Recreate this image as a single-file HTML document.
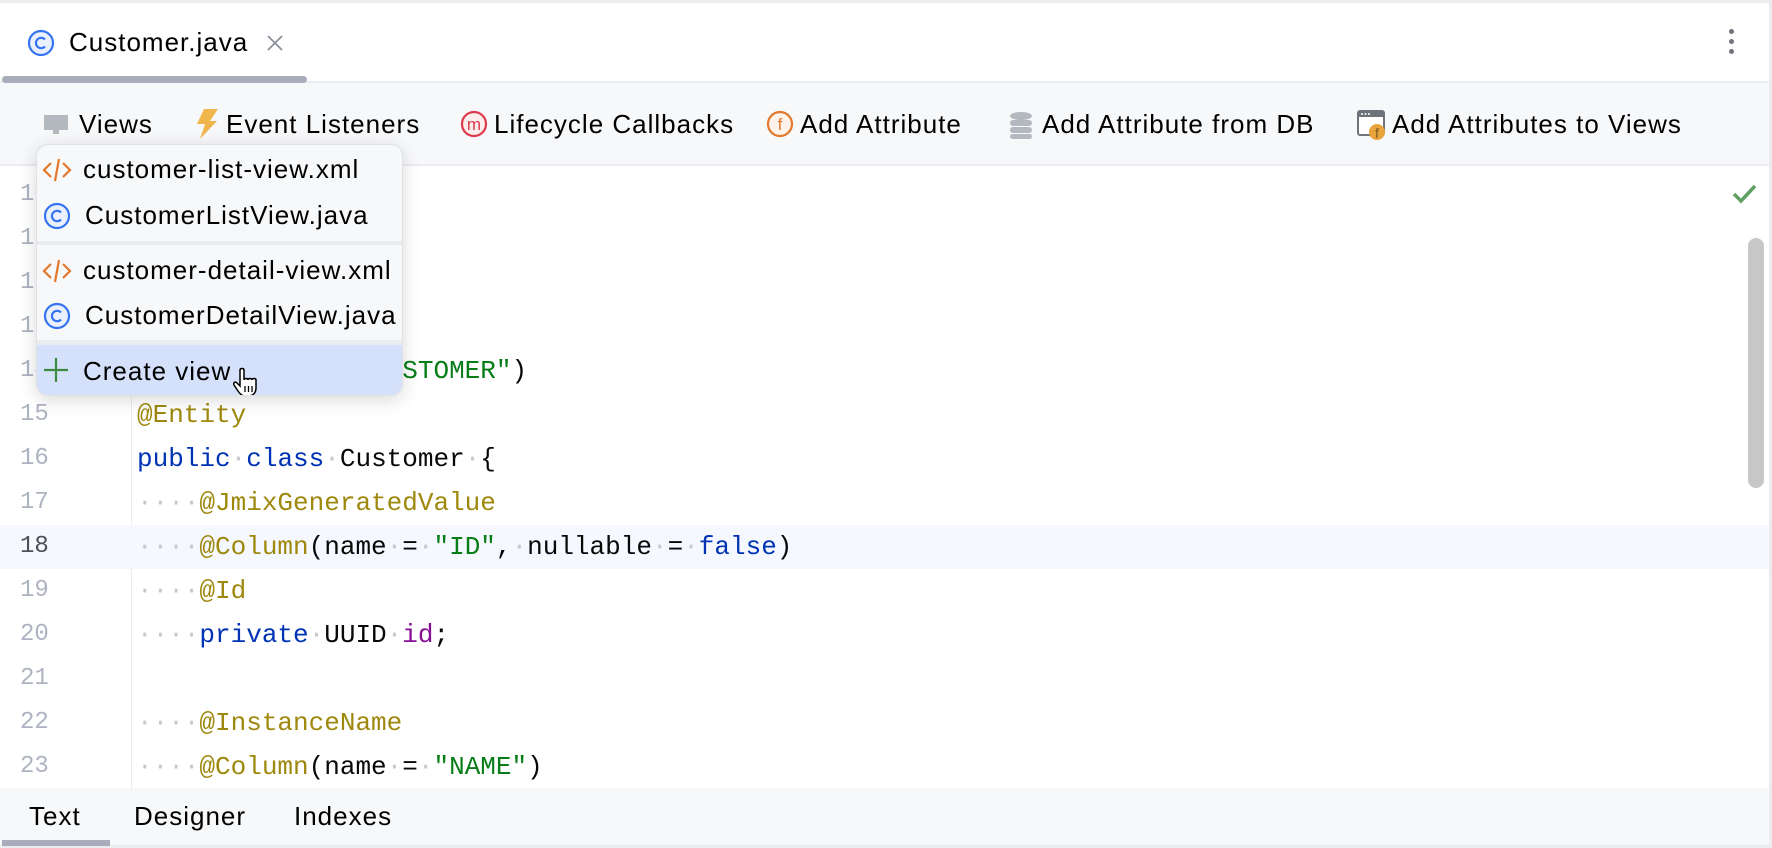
<!DOCTYPE html>
<html><head><meta charset="utf-8"><style>
*{margin:0;padding:0;box-sizing:border-box}
body{width:1772px;height:848px;overflow:hidden;background:#fff;position:relative;font-family:"Liberation Sans",sans-serif;color:#000}
.abs{position:absolute}
.ui{font-size:26px;letter-spacing:1px;white-space:nowrap}
.ln{position:absolute;left:0;width:131px;height:44px;line-height:44px;font-family:"Liberation Mono",monospace;font-size:24px;color:#aeb3c2;padding-left:20px}
.cl{position:absolute;left:137px;height:44px;line-height:44px;font-family:"Liberation Mono",monospace;font-size:26px;white-space:pre;color:#080808}
.a{color:#9e880d}.k{color:#0033b3}.s{color:#067d17}.p{color:#871094}.d{color:#c5c9d2}
.row{position:absolute;left:0;width:367px;height:45px;line-height:45px;font-size:26px;letter-spacing:1px;white-space:nowrap}
</style></head><body>
<div class="abs" style="left:0;top:0;width:1772px;height:3px;background:#ebecf0"></div>
<div class="abs" style="right:0;top:0;width:3px;height:848px;background:#ebecf0"></div>
<div class="abs" style="left:27px;top:29px"><svg width="28" height="28" viewBox="0 0 28 28"><circle cx="14" cy="14" r="12" fill="#eaf0fd" stroke="#3574f0" stroke-width="2.2"/><path d="M18 10.5a5.2 5.2 0 1 0 0 7" fill="none" stroke="#3574f0" stroke-width="2.2"/></svg></div>
<div class="abs ui" style="left:69px;top:27px">Customer.java</div>
<div class="abs" style="left:265px;top:33px"><svg width="20" height="20"><path d="M3 3L17 17M17 3L3 17" stroke="#8c909a" stroke-width="1.8"/></svg></div>
<div class="abs" style="left:1729px;top:29px;width:5px;height:5px;border-radius:50%;background:#6f737a"></div>
<div class="abs" style="left:1729px;top:39px;width:5px;height:5px;border-radius:50%;background:#6f737a"></div>
<div class="abs" style="left:1729px;top:49px;width:5px;height:5px;border-radius:50%;background:#6f737a"></div>
<div class="abs" style="left:0;top:81px;width:1769px;height:2px;background:#ebecf0"></div>
<div class="abs" style="left:2px;top:76px;width:305px;height:7px;border-radius:4px;background:#a9adbb"></div>
<div class="abs" style="left:0;top:83px;width:1769px;height:82px;background:#f7f8fa"></div>
<div class="abs" style="left:0;top:164px;width:1769px;height:2px;background:#ebecf0"></div>
<div class="abs" style="left:43px;top:113px"><svg width="26" height="24"><rect x="1" y="2" width="24" height="15" fill="#b4b8bf"/><rect x="10" y="17" width="6" height="4" fill="#b4b8bf"/></svg></div>
<div class="abs ui" style="left:79px;top:109px">Views</div>
<div class="abs" style="left:194px;top:108px"><svg width="26" height="32"><path d="M10 1H24L16 13H23L6 31L11 16H3Z" fill="#f0b64b"/></svg></div>
<div class="abs ui" style="left:226px;top:109px">Event Listeners</div>
<div class="abs" style="left:460px;top:110px"><svg width="28" height="28"><circle cx="14" cy="14" r="12" fill="#fdeeee" stroke="#db3b4b" stroke-width="2.2"/><text x="14" y="20" text-anchor="middle" font-family="Liberation Sans" font-size="17" fill="#db3b4b">m</text></svg></div>
<div class="abs ui" style="left:494px;top:109px">Lifecycle Callbacks</div>
<div class="abs" style="left:766px;top:110px"><svg width="28" height="28"><circle cx="14" cy="14" r="12" fill="#fdf3ea" stroke="#e2792c" stroke-width="2.2"/><text x="14" y="20" text-anchor="middle" font-family="Liberation Sans" font-size="17" fill="#e2792c">f</text></svg></div>
<div class="abs ui" style="left:800px;top:109px">Add Attribute</div>
<div class="abs" style="left:1009px;top:111px"><svg width="24" height="28"><ellipse cx="12" cy="5" rx="11" ry="4" fill="#b4b8bf"/><rect x="1" y="9" width="22" height="6" rx="3" fill="#b4b8bf"/><rect x="1" y="16" width="22" height="6" rx="3" fill="#b4b8bf"/><rect x="1" y="23" width="22" height="5" rx="2.5" fill="#b4b8bf"/></svg></div>
<div class="abs ui" style="left:1042px;top:109px">Add Attribute from DB</div>
<div class="abs" style="left:1357px;top:109px"><svg width="30" height="32"><rect x="1" y="2" width="26" height="24" rx="2" fill="#fff" stroke="#6f737a" stroke-width="2"/><rect x="1" y="2" width="26" height="6" fill="#6f737a"/><circle cx="5" cy="5" r="1" fill="#fff"/><circle cx="8.5" cy="5" r="1" fill="#fff"/><circle cx="12" cy="5" r="1" fill="#fff"/><circle cx="20" cy="23" r="8" fill="#e8a33b"/><text x="20" y="29" text-anchor="middle" font-family="Liberation Sans" font-size="14" fill="#7a5a20">f</text></svg></div>
<div class="abs ui" style="left:1392px;top:109px">Add Attributes to Views</div>
<div class="abs" style="left:131px;top:166px;width:1px;height:622px;background:#ebecf0"></div>
<div class="abs" style="left:0;top:525px;width:1769px;height:44px;background:#f5f8fe"></div>
<div class="abs" style="left:1732px;top:183px"><svg width="26" height="22"><path d="M2 11L9 18L23 3" fill="none" stroke="#5fa062" stroke-width="3.5"/></svg></div>
<div class="abs" style="left:1748px;top:238px;width:16px;height:250px;border-radius:8px;background:#c7c7c7"></div>
<div class="ln" style="top:173px">10</div>
<div class="ln" style="top:217px">11</div>
<div class="ln" style="top:261px">12</div>
<div class="ln" style="top:305px">13</div>
<div class="ln" style="top:349px">14</div>
<div class="ln" style="top:393px">15</div>
<div class="ln" style="top:437px">16</div>
<div class="ln" style="top:481px">17</div>
<div class="ln" style="top:525px;color:#4c5057">18</div>
<div class="ln" style="top:569px">19</div>
<div class="ln" style="top:613px">20</div>
<div class="ln" style="top:657px">21</div>
<div class="ln" style="top:701px">22</div>
<div class="ln" style="top:745px">23</div>
<div class="cl" style="top:349px"><span class="a">@Table</span>(name<span class="d">·</span>=<span class="d">·</span><span class="s">"CUSTOMER"</span>)</div>
<div class="cl" style="top:393px"><span class="a">@Entity</span></div>
<div class="cl" style="top:437px"><span class="k">public</span><span class="d">·</span><span class="k">class</span><span class="d">·</span>Customer<span class="d">·</span>{</div>
<div class="cl" style="top:481px"><span class="d">····</span><span class="a">@JmixGeneratedValue</span></div>
<div class="cl" style="top:525px"><span class="d">····</span><span class="a">@Column</span>(name<span class="d">·</span>=<span class="d">·</span><span class="s">"ID"</span>,<span class="d">·</span>nullable<span class="d">·</span>=<span class="d">·</span><span class="k">false</span>)</div>
<div class="cl" style="top:569px"><span class="d">····</span><span class="a">@Id</span></div>
<div class="cl" style="top:613px"><span class="d">····</span><span class="k">private</span><span class="d">·</span>UUID<span class="d">·</span><span class="p">id</span>;</div>
<div class="cl" style="top:701px"><span class="d">····</span><span class="a">@InstanceName</span></div>
<div class="cl" style="top:745px"><span class="d">····</span><span class="a">@Column</span>(name<span class="d">·</span>=<span class="d">·</span><span class="s">"NAME"</span>)</div>
<div class="abs" style="left:0;top:788px;width:1769px;height:60px;background:#f7f8fa"></div>
<div class="abs" style="left:0;top:845px;width:1772px;height:3px;background:#ebecf0"></div>
<div class="abs ui" style="left:29px;top:801px">Text</div>
<div class="abs ui" style="left:134px;top:801px">Designer</div>
<div class="abs ui" style="left:294px;top:801px">Indexes</div>
<div class="abs" style="left:2px;top:840px;width:108px;height:6px;background:#a9adbb"></div>
<div class="abs" style="left:36px;top:144px;width:367px;height:252px;border-radius:12px;background:#f7f8fa;border:1px solid #dfe1e5;box-shadow:0 4px 18px rgba(0,0,0,.15);overflow:hidden">
 <div class="row" style="top:2px"><svg class="abs" style="left:5px;top:10px" width="30" height="26"><path d="M9 6L2 13L9 20M21 6L28 13L21 20M17 2L13 24" fill="none" stroke="#e2792c" stroke-width="2.2"/></svg><span class="abs" style="left:46px">customer-list-view.xml</span></div>
 <div class="row" style="top:48px"><svg class="abs" style="left:6px;top:9px" width="28" height="28"><circle cx="14" cy="14" r="12" fill="#eaf0fd" stroke="#3574f0" stroke-width="2.2"/><path d="M18 10.5a5.2 5.2 0 1 0 0 7" fill="none" stroke="#3574f0" stroke-width="2.2"/></svg><span class="abs" style="left:48px">CustomerListView.java</span></div>
 <div class="abs" style="left:0;top:96px;width:367px;height:4px;background:#ebecf0"></div>
 <div class="row" style="top:103px"><svg class="abs" style="left:5px;top:10px" width="30" height="26"><path d="M9 6L2 13L9 20M21 6L28 13L21 20M17 2L13 24" fill="none" stroke="#e2792c" stroke-width="2.2"/></svg><span class="abs" style="left:46px">customer-detail-view.xml</span></div>
 <div class="row" style="top:148px"><svg class="abs" style="left:6px;top:9px" width="28" height="28"><circle cx="14" cy="14" r="12" fill="#eaf0fd" stroke="#3574f0" stroke-width="2.2"/><path d="M18 10.5a5.2 5.2 0 1 0 0 7" fill="none" stroke="#3574f0" stroke-width="2.2"/></svg><span class="abs" style="left:48px">CustomerDetailView.java</span></div>
 <div class="abs" style="left:0;top:195px;width:367px;height:5px;background:#ebecf0"></div>
 <div class="row" style="top:200px;height:52px;line-height:52px;background:#d5e1fa"><svg class="abs" style="left:6px;top:12px" width="26" height="26"><path d="M13 1V25M1 13H25" stroke="#3e8a3e" stroke-width="2.2"/></svg><span class="abs" style="left:46px">Create view</span>
 <svg class="abs" style="left:196px;top:20px" width="30" height="36" viewBox="0 0 30 32"><path d="M7 3c0-2 4-2 4 0v10c0-2 4-2 4 0c0-2 4-2 4 0c0-2 4-2 4 0v8c0 5-3 8-8 8h-3c-3 0-5-2-7-5l-4-6c-1-2 1-4 3-2l3 3z" fill="#fff" stroke="#000" stroke-width="1.5"/><path d="M12 19v6M15.5 19v6M19 19v6" stroke="#000" stroke-width="1.3"/></svg></div>
</div>
</body></html>
